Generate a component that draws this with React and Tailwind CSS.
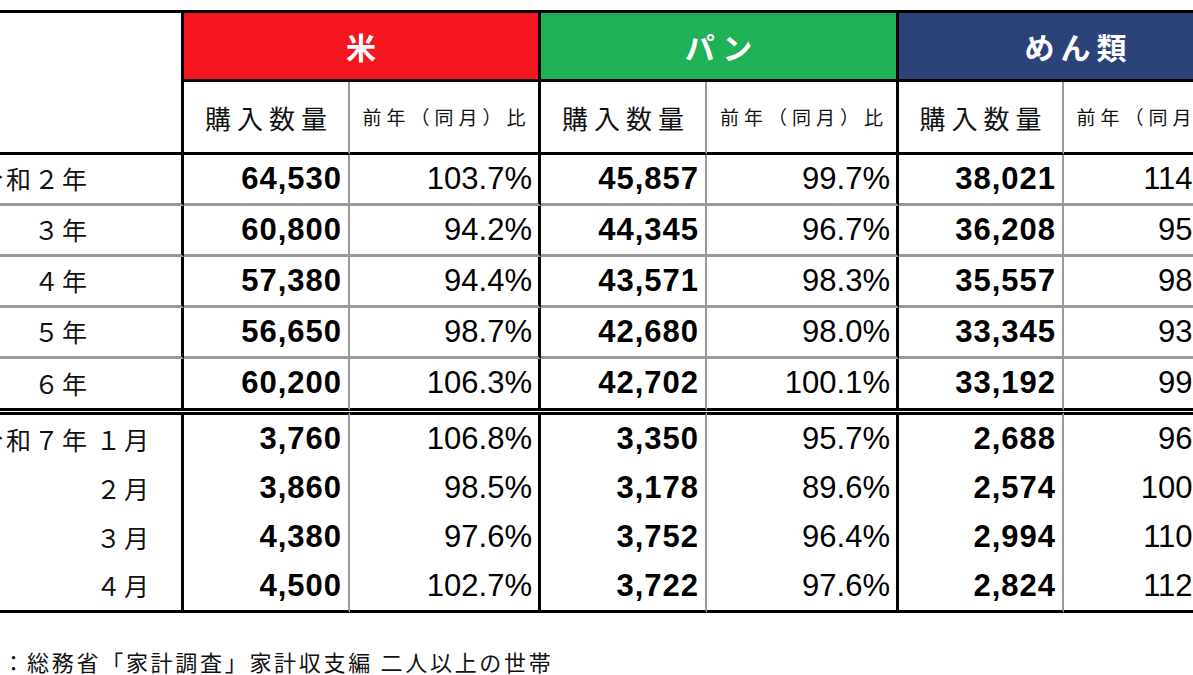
import React from "react";

const upper = [
  { year: "令和２年", v: ["64,530", "103.7%", "45,857", "99.7%", "38,021", "114.2%"] },
  { year: "３年", v: ["60,800", "94.2%", "44,345", "96.7%", "36,208", "95.2%"] },
  { year: "４年", v: ["57,380", "94.4%", "43,571", "98.3%", "35,557", "98.2%"] },
  { year: "５年", v: ["56,650", "98.7%", "42,680", "98.0%", "33,345", "93.8%"] },
  { year: "６年", v: ["60,200", "106.3%", "42,702", "100.1%", "33,192", "99.5%"] },
];

const lower = [
  { year: "令和７年", month: "１月", v: ["3,760", "106.8%", "3,350", "95.7%", "2,688", "96.5%"] },
  { year: "", month: "２月", v: ["3,860", "98.5%", "3,178", "89.6%", "2,574", "100.2%"] },
  { year: "", month: "３月", v: ["4,380", "97.6%", "3,752", "96.4%", "2,994", "110.6%"] },
  { year: "", month: "４月", v: ["4,500", "102.7%", "3,722", "97.6%", "2,824", "112.1%"] },
];

const categories = [
  { label: "米", bg: "bg-[#f5151f]" },
  { label: "パン", bg: "bg-[#1fb155]" },
  { label: "めん類", bg: "bg-[#2c4379]" },
];

function LabelCell({ year, month, rowClass }) {
  return (
    <div className={`flex items-center border-r-[3px] border-r-black text-[25px] text-[#111] ${rowClass}`}>
      <span className="w-[130px] text-right tracking-[3px]">{year}</span>
      <span className="w-[62px] text-right tracking-[3px]">{month}</span>
    </div>
  );
}

function ValueCells({ values, rowClass }) {
  return values.map((val, i) => {
    const isQty = i % 2 === 0;
    const edge = isQty ? "border-r-2 border-r-[#9a9a9a]" : "border-r-[3px] border-r-black";
    return (
      <div
        key={i}
        className={`flex items-center justify-end pr-[6px] text-black text-[31px] font-['Liberation_Sans',Arial,sans-serif] ${isQty ? "font-bold tracking-[1px]" : ""} ${edge} ${rowClass}`}
      >
        {val}
      </div>
    );
  });
}

export default function App() {
  return (
    <div className="w-[1193px] h-[675px] overflow-hidden bg-white font-['Noto_Sans_CJK_JP','Noto_Sans',sans-serif]">
      <div className="ml-[-40px] mt-[10px] w-[1295px] grid grid-cols-[224px_166px_191px_166px_192px_165px_191px] border-t-[3px] border-black">
        {/* header */}
        <div className="row-span-2 border-r-[3px] border-b-[3px] border-black" />
        {categories.map((c) => (
          <div
            key={c.label}
            className={`col-span-2 h-[69px] flex items-center justify-center border-r-[3px] border-b-[3px] border-black ${c.bg} text-white font-bold text-[30px] tracking-[6px] pl-[6px]`}
          >
            {c.label}
          </div>
        ))}
        {categories.map((c) => (
          <React.Fragment key={c.label}>
            <div className="h-[73px] flex items-center justify-center border-b-[3px] border-b-black border-r-2 border-r-[#9a9a9a] text-[26px] tracking-[6px] pl-[6px] text-[#111]">
              購入数量
            </div>
            <div className="h-[73px] flex items-center justify-center border-b-[3px] border-r-[3px] border-black text-[19px] tracking-[5px] pl-[5px] text-[#111]">
              前年（同月）比
            </div>
          </React.Fragment>
        ))}

        {/* annual rows */}
        {upper.map((r, idx) => {
          const rowClass =
            idx === upper.length - 1
              ? "h-[52px] border-b-[3px] border-b-black"
              : "h-[51px] border-b-[3px] border-b-[#9a9a9a]";
          return (
            <React.Fragment key={r.year}>
              <LabelCell year={r.year} month="" rowClass={rowClass} />
              <ValueCells values={r.v} rowClass={rowClass} />
            </React.Fragment>
          );
        })}

        {/* gap of the double rule */}
        <div className="col-span-7 h-px bg-white" />

        {/* monthly rows */}
        {lower.map((r, idx) => {
          let rowClass = "h-[49px]";
          if (idx === 0) rowClass = "h-[52px] border-t-[3px] border-t-black";
          if (idx === lower.length - 1) rowClass = "h-[51px] border-b-[3px] border-b-black";
          return (
            <React.Fragment key={r.month}>
              <LabelCell year={r.year} month={r.month} rowClass={rowClass} />
              <ValueCells values={r.v} rowClass={rowClass} />
            </React.Fragment>
          );
        })}
      </div>

      <p className="ml-[-47px] mt-[33px] text-[22px] leading-[30px] tracking-[2.7px] text-[#111] whitespace-nowrap">
        資料：総務省「家計調査」家計収支編 二人以上の世帯
      </p>
    </div>
  );
}
